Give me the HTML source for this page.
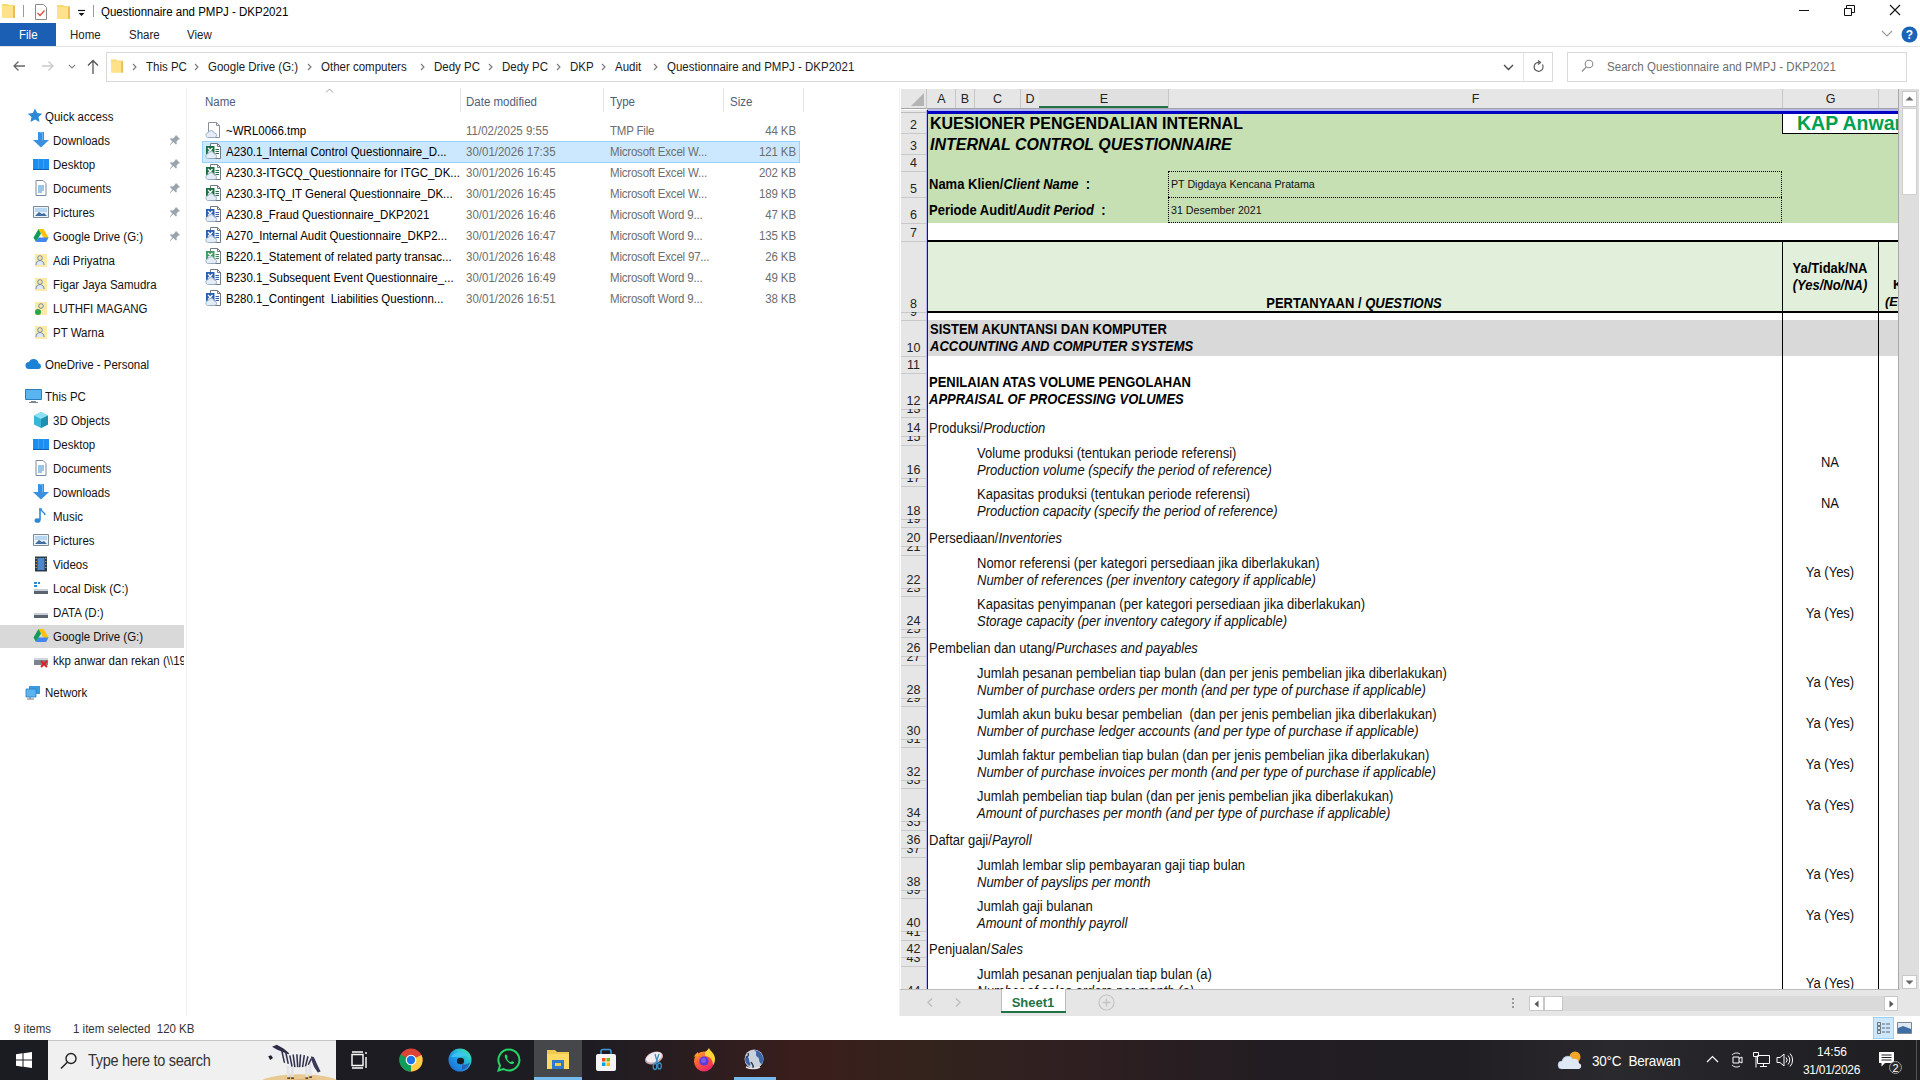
<!DOCTYPE html><html><head><meta charset="utf-8"><style>
*{margin:0;padding:0;box-sizing:border-box}
html,body{width:1920px;height:1080px;overflow:hidden;background:#fff;font-family:"Liberation Sans",sans-serif;color:#000}
.ab{position:absolute}
.t{position:absolute;white-space:nowrap;line-height:1}
.ui{font-size:11.5px;color:#000}
svg{position:absolute;overflow:visible}
</style></head><body>
<svg style="left:2px;top:3px" width="14" height="16" viewBox="0 0 14 16"><path d="M0 1h6l1 1h6v13H0z" fill="#f8d775"/><path d="M0 3h13v12H0z" fill="#ffe28a"/><path d="M11 3h2v12h-2z" fill="#e8bf52"/></svg>
<div class="ab" style="left:23px;top:5px;width:1px;height:12px;background:#9a9a9a"></div>
<svg style="left:35px;top:4px" width="12" height="16" viewBox="0 0 12 16"><path d="M0.5 0.5h8l3 3v12h-11z" fill="#fff" stroke="#8a8a8a"/><path d="M2.5 9l2.5 2.5 4.5-5" fill="none" stroke="#e04b3c" stroke-width="1.3"/></svg>
<svg style="left:57px;top:4px" width="14" height="16" viewBox="0 0 14 16"><path d="M0 1h6l1 1h6v13H0z" fill="#f8d775"/><path d="M0 3h13v12H0z" fill="#ffe28a"/><path d="M11 3h2v12h-2z" fill="#e8bf52"/></svg>
<svg style="left:77px;top:8px" width="10" height="9" viewBox="0 0 10 9"><path d="M1 2.5h7" stroke="#111" stroke-width="1.2"/><path d="M1.5 5h6l-3 3z" fill="#111"/></svg>
<div class="ab" style="left:93px;top:5px;width:1px;height:12px;background:#9a9a9a"></div>
<div class="t" style="left:101px;top:6.78px;font-size:11.5px;color:#000;transform:scaleY(1.12);transform-origin:0 9.73px;">Questionnaire and PMPJ - DKP2021</div>
<div class="ab" style="left:1799px;top:10px;width:10px;height:1px;background:#111"></div>
<svg style="left:1844px;top:5px" width="11" height="11" viewBox="0 0 11 11"><path d="M0.5 3.5h7v7h-7z M2.5 3.5v-3h8v7h-3" fill="none" stroke="#111"/></svg>
<svg style="left:1889px;top:4px" width="12" height="12" viewBox="0 0 12 12"><path d="M1 1l10 10M11 1L1 11" stroke="#111" stroke-width="1.1"/></svg>
<div class="ab" style="left:0px;top:23px;width:56px;height:23px;background:#1a5fb4"></div>
<div class="t" style="left:19px;top:29.78px;font-size:11.5px;color:#fff;transform:scaleY(1.12);transform-origin:0 9.73px;">File</div>
<div class="t" style="left:70px;top:29.78px;font-size:11.5px;color:#222;transform:scaleY(1.12);transform-origin:0 9.73px;">Home</div>
<div class="t" style="left:129px;top:29.78px;font-size:11.5px;color:#222;transform:scaleY(1.12);transform-origin:0 9.73px;">Share</div>
<div class="t" style="left:187px;top:29.78px;font-size:11.5px;color:#222;transform:scaleY(1.12);transform-origin:0 9.73px;">View</div>
<div class="ab" style="left:0px;top:46px;width:1920px;height:1px;background:#e3e3e3"></div>
<svg style="left:1881px;top:30px" width="12" height="8" viewBox="0 0 12 8"><path d="M1 1l5 5 5-5" fill="none" stroke="#9a9a9a" stroke-width="1.2"/></svg>
<svg style="left:1901px;top:26px" width="17" height="17" viewBox="0 0 17 17"><circle cx="8.5" cy="8.5" r="8" fill="#1a64b8"/><text x="8.5" y="13" font-size="12" font-weight="bold" text-anchor="middle" fill="#fff" font-family="Liberation Sans">?</text></svg>
<svg style="left:12px;top:60px" width="14" height="12" viewBox="0 0 14 12"><path d="M13 6H2M6.5 1.5L2 6l4.5 4.5" fill="none" stroke="#666" stroke-width="1.3"/></svg>
<svg style="left:41px;top:60px" width="14" height="12" viewBox="0 0 14 12"><path d="M1 6h11M7.5 1.5L12 6l-4.5 4.5" fill="none" stroke="#c9c9c9" stroke-width="1.3"/></svg>
<svg style="left:68px;top:64px" width="8" height="5" viewBox="0 0 8 5"><path d="M1 1l3 3 3-3" fill="none" stroke="#888" stroke-width="1.1"/></svg>
<svg style="left:87px;top:59px" width="12" height="15" viewBox="0 0 12 15"><path d="M6 15V2M1 6.5L6 1.5l5 5" fill="none" stroke="#555" stroke-width="1.3"/></svg>
<div class="ab" style="left:106px;top:52px;width:1447px;height:30px;border:1px solid #d9d9d9;background:#fff"></div>
<div class="ab" style="left:1523px;top:53px;width:1px;height:28px;background:#e5e5e5"></div>
<svg style="left:111px;top:58px" width="13" height="16" viewBox="0 0 14 16"><path d="M0 1h6l1 1h6v13H0z" fill="#f8d775"/><path d="M0 3h13v12H0z" fill="#ffe28a"/><path d="M11 3h2v12h-2z" fill="#e8bf52"/></svg>
<svg style="left:132px;top:63px" width="5" height="8" viewBox="0 0 5 8"><path d="M1 1l3 3-3 3" fill="none" stroke="#777" stroke-width="1.1"/></svg>
<svg style="left:194px;top:63px" width="5" height="8" viewBox="0 0 5 8"><path d="M1 1l3 3-3 3" fill="none" stroke="#777" stroke-width="1.1"/></svg>
<svg style="left:307px;top:63px" width="5" height="8" viewBox="0 0 5 8"><path d="M1 1l3 3-3 3" fill="none" stroke="#777" stroke-width="1.1"/></svg>
<svg style="left:420px;top:63px" width="5" height="8" viewBox="0 0 5 8"><path d="M1 1l3 3-3 3" fill="none" stroke="#777" stroke-width="1.1"/></svg>
<svg style="left:488px;top:63px" width="5" height="8" viewBox="0 0 5 8"><path d="M1 1l3 3-3 3" fill="none" stroke="#777" stroke-width="1.1"/></svg>
<svg style="left:556px;top:63px" width="5" height="8" viewBox="0 0 5 8"><path d="M1 1l3 3-3 3" fill="none" stroke="#777" stroke-width="1.1"/></svg>
<svg style="left:601px;top:63px" width="5" height="8" viewBox="0 0 5 8"><path d="M1 1l3 3-3 3" fill="none" stroke="#777" stroke-width="1.1"/></svg>
<svg style="left:653px;top:63px" width="5" height="8" viewBox="0 0 5 8"><path d="M1 1l3 3-3 3" fill="none" stroke="#777" stroke-width="1.1"/></svg>
<div class="t" style="left:146px;top:61.77px;font-size:11.5px;color:#1a1a1a;transform:scaleY(1.12);transform-origin:0 9.73px;">This PC</div>
<div class="t" style="left:208px;top:61.77px;font-size:11.5px;color:#1a1a1a;transform:scaleY(1.12);transform-origin:0 9.73px;">Google Drive (G:)</div>
<div class="t" style="left:321px;top:61.77px;font-size:11.5px;color:#1a1a1a;transform:scaleY(1.12);transform-origin:0 9.73px;">Other computers</div>
<div class="t" style="left:434px;top:61.77px;font-size:11.5px;color:#1a1a1a;transform:scaleY(1.12);transform-origin:0 9.73px;">Dedy PC</div>
<div class="t" style="left:502px;top:61.77px;font-size:11.5px;color:#1a1a1a;transform:scaleY(1.12);transform-origin:0 9.73px;">Dedy PC</div>
<div class="t" style="left:570px;top:61.77px;font-size:11.5px;color:#1a1a1a;transform:scaleY(1.12);transform-origin:0 9.73px;">DKP</div>
<div class="t" style="left:615px;top:61.77px;font-size:11.5px;color:#1a1a1a;transform:scaleY(1.12);transform-origin:0 9.73px;">Audit</div>
<div class="t" style="left:667px;top:61.77px;font-size:11.5px;color:#1a1a1a;transform:scaleY(1.12);transform-origin:0 9.73px;">Questionnaire and PMPJ - DKP2021</div>
<svg style="left:1503px;top:64px" width="11" height="7" viewBox="0 0 11 7"><path d="M1 1l4.5 4.5L10 1" fill="none" stroke="#444" stroke-width="1.3"/></svg>
<svg style="left:1533px;top:60px" width="12" height="13" viewBox="0 0 12 13"><path d="M9.5 4.5A4.5 4.5 0 1 1 6 2.3" fill="none" stroke="#555" stroke-width="1.2"/><path d="M5 0.5l2.5 2-2.5 2" fill="none" stroke="#555" stroke-width="1.2"/></svg>
<div class="ab" style="left:1567px;top:52px;width:340px;height:30px;border:1px solid #d9d9d9;background:#fff"></div>
<svg style="left:1581px;top:59px" width="13" height="14" viewBox="0 0 13 14"><circle cx="8" cy="5" r="3.8" fill="none" stroke="#8a8a8a" stroke-width="1.1"/><path d="M5.3 7.8L1 12.5" stroke="#8a8a8a" stroke-width="1.2"/></svg>
<div class="t" style="left:1607px;top:61.77px;font-size:11.5px;color:#6d6d6d;transform:scaleY(1.12);transform-origin:0 9.73px;letter-spacing:0.05px">Search Questionnaire and PMPJ - DKP2021</div>
<div class="ab" style="left:0px;top:625px;width:184px;height:23px;background:#d9d9d9"></div>
<div class="ab" style="left:0;top:0;width:184px;height:1016px;overflow:hidden">
<svg style="left:27px;top:108px" width="16" height="16" viewBox="0 0 16 16"><path d="M8 0.5l2.2 4.6 5 .6-3.7 3.4 1 5-4.5-2.5-4.5 2.5 1-5L0.8 5.7l5-.6z" fill="#2a8ad8"/></svg>
<div class="t" style="left:45px;top:111.77px;font-size:11.5px;color:#111;transform:scaleY(1.12);transform-origin:0 9.73px;">Quick access</div>
<svg style="left:33px;top:132px" width="16" height="16" viewBox="0 0 16 16"><path d="M5 0h6v8h5l-8 7.5L0 8h5z" fill="#3a8fe0"/><path d="M6.5 0.5h3v8" fill="none" stroke="#6ab2f0" stroke-width="1"/></svg>
<div class="t" style="left:53px;top:135.78px;font-size:11.5px;color:#111;transform:scaleY(1.12);transform-origin:0 9.73px;">Downloads</div>
<svg style="left:169px;top:134px" width="12" height="12" viewBox="0 0 12 12"><path d="M7 1l4 4-1.5.5-2 2 .3 2.5-1 .5-2.5-2.5L1.5 11 1 10.5 3.3 7.5 1 5.2l.5-1 2.5.3 2-2z" fill="#9aa4ad"/></svg>
<svg style="left:33px;top:156px" width="16" height="16" viewBox="0 0 16 16"><path d="M0 3h16v11H0z" fill="#1c8ef0"/><path d="M5 3h1v11H5zM10 3h1v11h-1z" fill="#3aa4f8"/><path d="M0 13h16v1H0z" fill="#0b5fb0"/></svg>
<div class="t" style="left:53px;top:159.78px;font-size:11.5px;color:#111;transform:scaleY(1.12);transform-origin:0 9.73px;">Desktop</div>
<svg style="left:169px;top:158px" width="12" height="12" viewBox="0 0 12 12"><path d="M7 1l4 4-1.5.5-2 2 .3 2.5-1 .5-2.5-2.5L1.5 11 1 10.5 3.3 7.5 1 5.2l.5-1 2.5.3 2-2z" fill="#9aa4ad"/></svg>
<svg style="left:33px;top:180px" width="16" height="16" viewBox="0 0 16 16"><path d="M3 0.5h7l3 3v12H3z" fill="#fff" stroke="#7a8ca0"/><path d="M5 6h6M5 8h6M5 10h6M5 12h4" stroke="#3a8ad0"/></svg>
<div class="t" style="left:53px;top:183.78px;font-size:11.5px;color:#111;transform:scaleY(1.12);transform-origin:0 9.73px;">Documents</div>
<svg style="left:169px;top:182px" width="12" height="12" viewBox="0 0 12 12"><path d="M7 1l4 4-1.5.5-2 2 .3 2.5-1 .5-2.5-2.5L1.5 11 1 10.5 3.3 7.5 1 5.2l.5-1 2.5.3 2-2z" fill="#9aa4ad"/></svg>
<svg style="left:33px;top:204px" width="16" height="16" viewBox="0 0 16 16"><path d="M0.5 2.5h15v11h-15z" fill="#eaf2fb" stroke="#7e8a96"/><path d="M2 12l4-4 3 2 2-1 3 3z" fill="#3f6ea0"/><path d="M2 4h12v4H2z" fill="#b9d6f0"/></svg>
<div class="t" style="left:53px;top:207.78px;font-size:11.5px;color:#111;transform:scaleY(1.12);transform-origin:0 9.73px;">Pictures</div>
<svg style="left:169px;top:206px" width="12" height="12" viewBox="0 0 12 12"><path d="M7 1l4 4-1.5.5-2 2 .3 2.5-1 .5-2.5-2.5L1.5 11 1 10.5 3.3 7.5 1 5.2l.5-1 2.5.3 2-2z" fill="#9aa4ad"/></svg>
<svg style="left:33px;top:228px" width="16" height="16" viewBox="0 0 16 16"><path d="M5.5 1h5l5 8.5-2.5 4.5z" fill="#ffc107"/><path d="M5.5 1L0.5 9.5 3 14l5-8.5z" fill="#0f9d58"/><path d="M3 14h10l2.5-4.5h-10z" fill="#4285f4"/></svg>
<div class="t" style="left:53px;top:231.78px;font-size:11.5px;color:#111;transform:scaleY(1.12);transform-origin:0 9.73px;">Google Drive (G:)</div>
<svg style="left:169px;top:230px" width="12" height="12" viewBox="0 0 12 12"><path d="M7 1l4 4-1.5.5-2 2 .3 2.5-1 .5-2.5-2.5L1.5 11 1 10.5 3.3 7.5 1 5.2l.5-1 2.5.3 2-2z" fill="#9aa4ad"/></svg>
<svg style="left:33px;top:252px" width="16" height="16" viewBox="0 0 16 16"><path d="M2 2h12v13H2z" fill="#ffe9a8"/><circle cx="7" cy="6" r="2.3" fill="none" stroke="#6b8cb0"/><path d="M3 13c0-3 2-4.5 4-4.5s4 1.5 4 4.5" fill="#dce8f5" stroke="#6b8cb0"/></svg>
<div class="t" style="left:53px;top:255.78px;font-size:11.5px;color:#111;transform:scaleY(1.12);transform-origin:0 9.73px;">Adi Priyatna</div>
<svg style="left:33px;top:276px" width="16" height="16" viewBox="0 0 16 16"><path d="M2 2h12v13H2z" fill="#ffe9a8"/><circle cx="7" cy="6" r="2.3" fill="none" stroke="#6b8cb0"/><path d="M3 13c0-3 2-4.5 4-4.5s4 1.5 4 4.5" fill="#dce8f5" stroke="#6b8cb0"/></svg>
<div class="t" style="left:53px;top:279.78px;font-size:11.5px;color:#111;transform:scaleY(1.12);transform-origin:0 9.73px;">Figar Jaya Samudra</div>
<svg style="left:33px;top:300px" width="16" height="16" viewBox="0 0 16 16"><path d="M2 2h12v13H2z" fill="#ffe9a8"/><circle cx="8" cy="6" r="2.3" fill="none" stroke="#6b8cb0"/><circle cx="5" cy="12" r="3" fill="#28a745"/></svg>
<div class="t" style="left:53px;top:303.78px;font-size:11.5px;color:#111;transform:scaleY(1.12);transform-origin:0 9.73px;">LUTHFI MAGANG</div>
<svg style="left:33px;top:324px" width="16" height="16" viewBox="0 0 16 16"><path d="M2 2h12v13H2z" fill="#ffe9a8"/><circle cx="7" cy="6" r="2.3" fill="none" stroke="#6b8cb0"/><path d="M3 13c0-3 2-4.5 4-4.5s4 1.5 4 4.5" fill="#dce8f5" stroke="#6b8cb0"/></svg>
<div class="t" style="left:53px;top:327.78px;font-size:11.5px;color:#111;transform:scaleY(1.12);transform-origin:0 9.73px;">PT Warna</div>
<svg style="left:25px;top:356px" width="16" height="16" viewBox="0 0 16 16"><path d="M4 13a3.5 3.5 0 0 1 0-7 5 5 0 0 1 9.5 1.2A3 3 0 0 1 14 13z" fill="#1d82d6"/></svg>
<div class="t" style="left:45px;top:359.78px;font-size:11.5px;color:#111;transform:scaleY(1.12);transform-origin:0 9.73px;">OneDrive - Personal</div>
<svg style="left:25px;top:388px" width="16" height="16" viewBox="0 0 16 16"><path d="M0.5 1.5h16v10h-16z" fill="#5ab4f0" stroke="#2c7cc0"/><path d="M6 13h5v1H6z M4 14h9v1H4z" fill="#7b8a99"/></svg>
<div class="t" style="left:45px;top:391.78px;font-size:11.5px;color:#111;transform:scaleY(1.12);transform-origin:0 9.73px;">This PC</div>
<svg style="left:33px;top:412px" width="16" height="16" viewBox="0 0 16 16"><path d="M8 0l7 3.5v9L8 16l-7-3.5v-9z" fill="#37b6d6"/><path d="M8 7L1 3.5 8 0l7 3.5z" fill="#8fe0f0"/><path d="M8 7v9l7-3.5v-9z" fill="#1f8fb0"/></svg>
<div class="t" style="left:53px;top:415.78px;font-size:11.5px;color:#111;transform:scaleY(1.12);transform-origin:0 9.73px;">3D Objects</div>
<svg style="left:33px;top:436px" width="16" height="16" viewBox="0 0 16 16"><path d="M0 3h16v11H0z" fill="#1c8ef0"/><path d="M5 3h1v11H5zM10 3h1v11h-1z" fill="#3aa4f8"/><path d="M0 13h16v1H0z" fill="#0b5fb0"/></svg>
<div class="t" style="left:53px;top:439.78px;font-size:11.5px;color:#111;transform:scaleY(1.12);transform-origin:0 9.73px;">Desktop</div>
<svg style="left:33px;top:460px" width="16" height="16" viewBox="0 0 16 16"><path d="M3 0.5h7l3 3v12H3z" fill="#fff" stroke="#7a8ca0"/><path d="M5 6h6M5 8h6M5 10h6M5 12h4" stroke="#3a8ad0"/></svg>
<div class="t" style="left:53px;top:463.78px;font-size:11.5px;color:#111;transform:scaleY(1.12);transform-origin:0 9.73px;">Documents</div>
<svg style="left:33px;top:484px" width="16" height="16" viewBox="0 0 16 16"><path d="M5 0h6v8h5l-8 7.5L0 8h5z" fill="#3a8fe0"/><path d="M6.5 0.5h3v8" fill="none" stroke="#6ab2f0" stroke-width="1"/></svg>
<div class="t" style="left:53px;top:487.78px;font-size:11.5px;color:#111;transform:scaleY(1.12);transform-origin:0 9.73px;">Downloads</div>
<svg style="left:33px;top:508px" width="16" height="16" viewBox="0 0 16 16"><path d="M6 1h2c0 3 4 3 4 6" fill="none" stroke="#2a8ad8" stroke-width="1.5"/><path d="M7 1v11" stroke="#2a8ad8" stroke-width="1.6"/><ellipse cx="4.5" cy="12.5" rx="3" ry="2.3" fill="#2a8ad8"/></svg>
<div class="t" style="left:53px;top:511.78px;font-size:11.5px;color:#111;transform:scaleY(1.12);transform-origin:0 9.73px;">Music</div>
<svg style="left:33px;top:532px" width="16" height="16" viewBox="0 0 16 16"><path d="M0.5 2.5h15v11h-15z" fill="#eaf2fb" stroke="#7e8a96"/><path d="M2 12l4-4 3 2 2-1 3 3z" fill="#3f6ea0"/><path d="M2 4h12v4H2z" fill="#b9d6f0"/></svg>
<div class="t" style="left:53px;top:535.77px;font-size:11.5px;color:#111;transform:scaleY(1.12);transform-origin:0 9.73px;">Pictures</div>
<svg style="left:33px;top:556px" width="16" height="16" viewBox="0 0 16 16"><path d="M2 0.5h12v15H2z" fill="#2a3a4a"/><path d="M4.5 2h7v12h-7z" fill="#4d88c8"/><path d="M2.7 2h1v1h-1zM2.7 5h1v1h-1zM2.7 8h1v1h-1zM2.7 11h1v1h-1zM12.3 2h1v1h-1zM12.3 5h1v1h-1zM12.3 8h1v1h-1zM12.3 11h1v1h-1z" fill="#e8c24a"/></svg>
<div class="t" style="left:53px;top:559.77px;font-size:11.5px;color:#111;transform:scaleY(1.12);transform-origin:0 9.73px;">Videos</div>
<svg style="left:33px;top:580px" width="16" height="16" viewBox="0 0 16 16"><path d="M1 9h14v5H1z" fill="#5a6470"/><path d="M1 9h14v2H1z" fill="#c8ced6"/><path d="M1 2h3v2H1zM5 2h2v2H5zM1 5h3v2H1z" fill="#2a8ad8"/></svg>
<div class="t" style="left:53px;top:583.77px;font-size:11.5px;color:#111;transform:scaleY(1.12);transform-origin:0 9.73px;">Local Disk (C:)</div>
<svg style="left:33px;top:604px" width="16" height="16" viewBox="0 0 16 16"><path d="M1 9h14v5H1z" fill="#5a6470"/><path d="M1 9h14v2H1z" fill="#c8ced6"/></svg>
<div class="t" style="left:53px;top:607.77px;font-size:11.5px;color:#111;transform:scaleY(1.12);transform-origin:0 9.73px;">DATA (D:)</div>
<svg style="left:33px;top:628px" width="16" height="16" viewBox="0 0 16 16"><path d="M5.5 1h5l5 8.5-2.5 4.5z" fill="#ffc107"/><path d="M5.5 1L0.5 9.5 3 14l5-8.5z" fill="#0f9d58"/><path d="M3 14h10l2.5-4.5h-10z" fill="#4285f4"/></svg>
<div class="t" style="left:53px;top:631.77px;font-size:11.5px;color:#111;transform:scaleY(1.12);transform-origin:0 9.73px;">Google Drive (G:)</div>
<svg style="left:33px;top:652px" width="16" height="16" viewBox="0 0 16 16"><path d="M1 6h14v7H1z" fill="#7b8490"/><path d="M1 6h14v2H1z" fill="#d0d6dc"/><path d="M8 9l6 6M14 9l-6 6" stroke="#e02020" stroke-width="2"/></svg>
<div class="t" style="left:53px;top:655.77px;font-size:11.5px;color:#111;transform:scaleY(1.12);transform-origin:0 9.73px;">kkp anwar dan rekan (\\192.168.1.2)</div>
<svg style="left:25px;top:684px" width="16" height="16" viewBox="0 0 16 16"><path d="M4 2h11v8H4z" fill="#3a9ae0"/><path d="M1 5h10v8H1z" fill="#5ab4f0" stroke="#2c7cc0" stroke-width=".8"/><path d="M5 13v2M2 15h7" stroke="#6a7a8a"/></svg>
<div class="t" style="left:45px;top:687.77px;font-size:11.5px;color:#111;transform:scaleY(1.12);transform-origin:0 9.73px;">Network</div>
</div>
<div class="ab" style="left:186px;top:88px;width:1px;height:928px;background:#f0f0f0"></div>
<div class="t" style="left:205px;top:96.77px;font-size:11.5px;color:#4c607a;transform:scaleY(1.12);transform-origin:0 9.73px;">Name</div>
<svg style="left:325px;top:88px" width="9" height="5" viewBox="0 0 9 5"><path d="M1 4.5l3.5-3.5 3.5 3.5" fill="none" stroke="#9aa0a6" stroke-width="1"/></svg>
<div class="t" style="left:466px;top:96.77px;font-size:11.5px;color:#4c607a;transform:scaleY(1.12);transform-origin:0 9.73px;">Date modified</div>
<div class="t" style="left:610px;top:96.77px;font-size:11.5px;color:#4c607a;transform:scaleY(1.12);transform-origin:0 9.73px;">Type</div>
<div class="t" style="left:730px;top:96.77px;font-size:11.5px;color:#4c607a;transform:scaleY(1.12);transform-origin:0 9.73px;">Size</div>
<div class="ab" style="left:460px;top:88px;width:1px;height:24px;background:#e5e5e5"></div>
<div class="ab" style="left:603px;top:88px;width:1px;height:24px;background:#e5e5e5"></div>
<div class="ab" style="left:723px;top:88px;width:1px;height:24px;background:#e5e5e5"></div>
<div class="ab" style="left:803px;top:88px;width:1px;height:24px;background:#e5e5e5"></div>
<div class="ab" style="left:202px;top:141px;width:598px;height:22px;background:#cce8ff;border:1px solid #99d1ff"></div>
<svg style="left:206px;top:122px" width="16" height="16" viewBox="0 0 16 16"><path d="M2.5 0.5h8l3 3v12h-11z" fill="#fff" stroke="#8a9096"/><path d="M10.5 0.5v3h3" fill="none" stroke="#8a9096"/><path d="M1.5 15.5a2.6 2.6 0 0 1 .6-5 3.3 3.3 0 0 1 6.2.6 2.2 2.2 0 0 1 .2 4.4z" fill="#e4ecf6" stroke="#8ea4bc" stroke-width=".8"/></svg>
<div class="t" style="left:226px;top:125.77px;font-size:11.5px;color:#000;transform:scaleY(1.12);transform-origin:0 9.73px;letter-spacing:0px">~WRL0066.tmp</div>
<div class="t" style="left:466px;top:125.77px;font-size:11.5px;color:#6d6d6d;transform:scaleY(1.12);transform-origin:0 9.73px;letter-spacing:0px">11/02/2025 9:55</div>
<div class="t" style="left:610px;top:125.77px;font-size:11.5px;color:#6d6d6d;transform:scaleY(1.12);transform-origin:0 9.73px;letter-spacing:-0.2px">TMP File</div>
<div class="t" style="right:1124px;top:125.80px;font-size:11.5px;color:#6d6d6d;letter-spacing:-0.1px;transform:scaleY(1.12);transform-origin:0 9.73px">44 KB</div>
<svg style="left:206px;top:143px" width="16" height="16" viewBox="0 0 16 16"><path d="M4.5 0.5h7l3 3v12h-10z" fill="#fff" stroke="#707a84"/><path d="M11.5 0.5v3h3" fill="none" stroke="#707a84"/><path d="M0 3h8.5v8.5H0z" fill="#1d6f42"/><path d="M2 5l4.5 4.5M6.5 5L2 9.5" stroke="#fff" stroke-width="1.2"/><path d="M9.5 6.5h3.5M9.5 8.5h3.5M9.5 10.5h3.5" stroke="#2a6a44" stroke-width="1"/><path d="M1.5 15.5a2.6 2.6 0 0 1 .6-5 3.3 3.3 0 0 1 6.2.6 2.2 2.2 0 0 1 .2 4.4z" fill="#e4ecf6" stroke="#8ea4bc" stroke-width=".8"/></svg>
<div class="t" style="left:226px;top:146.78px;font-size:11.5px;color:#000;transform:scaleY(1.12);transform-origin:0 9.73px;letter-spacing:0px">A230.1_Internal Control Questionnaire_D...</div>
<div class="t" style="left:466px;top:146.78px;font-size:11.5px;color:#6d6d6d;transform:scaleY(1.12);transform-origin:0 9.73px;letter-spacing:0px">30/01/2026 17:35</div>
<div class="t" style="left:610px;top:146.78px;font-size:11.5px;color:#6d6d6d;transform:scaleY(1.12);transform-origin:0 9.73px;letter-spacing:-0.2px">Microsoft Excel W...</div>
<div class="t" style="right:1124px;top:146.80px;font-size:11.5px;color:#6d6d6d;letter-spacing:-0.1px;transform:scaleY(1.12);transform-origin:0 9.73px">121 KB</div>
<svg style="left:206px;top:164px" width="16" height="16" viewBox="0 0 16 16"><path d="M4.5 0.5h7l3 3v12h-10z" fill="#fff" stroke="#707a84"/><path d="M11.5 0.5v3h3" fill="none" stroke="#707a84"/><path d="M0 3h8.5v8.5H0z" fill="#1d6f42"/><path d="M2 5l4.5 4.5M6.5 5L2 9.5" stroke="#fff" stroke-width="1.2"/><path d="M9.5 6.5h3.5M9.5 8.5h3.5M9.5 10.5h3.5" stroke="#2a6a44" stroke-width="1"/><path d="M1.5 15.5a2.6 2.6 0 0 1 .6-5 3.3 3.3 0 0 1 6.2.6 2.2 2.2 0 0 1 .2 4.4z" fill="#e4ecf6" stroke="#8ea4bc" stroke-width=".8"/></svg>
<div class="t" style="left:226px;top:167.78px;font-size:11.5px;color:#000;transform:scaleY(1.12);transform-origin:0 9.73px;letter-spacing:0px">A230.3-ITGCQ_Questionnaire for ITGC_DK...</div>
<div class="t" style="left:466px;top:167.78px;font-size:11.5px;color:#6d6d6d;transform:scaleY(1.12);transform-origin:0 9.73px;letter-spacing:0px">30/01/2026 16:45</div>
<div class="t" style="left:610px;top:167.78px;font-size:11.5px;color:#6d6d6d;transform:scaleY(1.12);transform-origin:0 9.73px;letter-spacing:-0.2px">Microsoft Excel W...</div>
<div class="t" style="right:1124px;top:167.80px;font-size:11.5px;color:#6d6d6d;letter-spacing:-0.1px;transform:scaleY(1.12);transform-origin:0 9.73px">202 KB</div>
<svg style="left:206px;top:185px" width="16" height="16" viewBox="0 0 16 16"><path d="M4.5 0.5h7l3 3v12h-10z" fill="#fff" stroke="#707a84"/><path d="M11.5 0.5v3h3" fill="none" stroke="#707a84"/><path d="M0 3h8.5v8.5H0z" fill="#1d6f42"/><path d="M2 5l4.5 4.5M6.5 5L2 9.5" stroke="#fff" stroke-width="1.2"/><path d="M9.5 6.5h3.5M9.5 8.5h3.5M9.5 10.5h3.5" stroke="#2a6a44" stroke-width="1"/><path d="M1.5 15.5a2.6 2.6 0 0 1 .6-5 3.3 3.3 0 0 1 6.2.6 2.2 2.2 0 0 1 .2 4.4z" fill="#e4ecf6" stroke="#8ea4bc" stroke-width=".8"/></svg>
<div class="t" style="left:226px;top:188.78px;font-size:11.5px;color:#000;transform:scaleY(1.12);transform-origin:0 9.73px;letter-spacing:0px">A230.3-ITQ_IT General Questionnaire_DK...</div>
<div class="t" style="left:466px;top:188.78px;font-size:11.5px;color:#6d6d6d;transform:scaleY(1.12);transform-origin:0 9.73px;letter-spacing:0px">30/01/2026 16:45</div>
<div class="t" style="left:610px;top:188.78px;font-size:11.5px;color:#6d6d6d;transform:scaleY(1.12);transform-origin:0 9.73px;letter-spacing:-0.2px">Microsoft Excel W...</div>
<div class="t" style="right:1124px;top:188.80px;font-size:11.5px;color:#6d6d6d;letter-spacing:-0.1px;transform:scaleY(1.12);transform-origin:0 9.73px">189 KB</div>
<svg style="left:206px;top:206px" width="16" height="16" viewBox="0 0 16 16"><path d="M4.5 0.5h7l3 3v12h-10z" fill="#fff" stroke="#707a84"/><path d="M11.5 0.5v3h3" fill="none" stroke="#707a84"/><path d="M0 3h8.5v8.5H0z" fill="#2b5fb4"/><path d="M2 5l4.5 4.5M6.5 5L2 9.5" stroke="#fff" stroke-width="1.2"/><path d="M9.5 6.5h3.5M9.5 8.5h3.5M9.5 10.5h3.5" stroke="#3a5fa8" stroke-width="1"/><path d="M1.5 15.5a2.6 2.6 0 0 1 .6-5 3.3 3.3 0 0 1 6.2.6 2.2 2.2 0 0 1 .2 4.4z" fill="#e4ecf6" stroke="#8ea4bc" stroke-width=".8"/></svg>
<div class="t" style="left:226px;top:209.78px;font-size:11.5px;color:#000;transform:scaleY(1.12);transform-origin:0 9.73px;letter-spacing:0px">A230.8_Fraud Questionnaire_DKP2021</div>
<div class="t" style="left:466px;top:209.78px;font-size:11.5px;color:#6d6d6d;transform:scaleY(1.12);transform-origin:0 9.73px;letter-spacing:0px">30/01/2026 16:46</div>
<div class="t" style="left:610px;top:209.78px;font-size:11.5px;color:#6d6d6d;transform:scaleY(1.12);transform-origin:0 9.73px;letter-spacing:-0.2px">Microsoft Word 9...</div>
<div class="t" style="right:1124px;top:209.80px;font-size:11.5px;color:#6d6d6d;letter-spacing:-0.1px;transform:scaleY(1.12);transform-origin:0 9.73px">47 KB</div>
<svg style="left:206px;top:227px" width="16" height="16" viewBox="0 0 16 16"><path d="M4.5 0.5h7l3 3v12h-10z" fill="#fff" stroke="#707a84"/><path d="M11.5 0.5v3h3" fill="none" stroke="#707a84"/><path d="M0 3h8.5v8.5H0z" fill="#2b5fb4"/><path d="M2 5l4.5 4.5M6.5 5L2 9.5" stroke="#fff" stroke-width="1.2"/><path d="M9.5 6.5h3.5M9.5 8.5h3.5M9.5 10.5h3.5" stroke="#3a5fa8" stroke-width="1"/><path d="M1.5 15.5a2.6 2.6 0 0 1 .6-5 3.3 3.3 0 0 1 6.2.6 2.2 2.2 0 0 1 .2 4.4z" fill="#e4ecf6" stroke="#8ea4bc" stroke-width=".8"/></svg>
<div class="t" style="left:226px;top:230.78px;font-size:11.5px;color:#000;transform:scaleY(1.12);transform-origin:0 9.73px;letter-spacing:0px">A270_Internal Audit Questionnaire_DKP2...</div>
<div class="t" style="left:466px;top:230.78px;font-size:11.5px;color:#6d6d6d;transform:scaleY(1.12);transform-origin:0 9.73px;letter-spacing:0px">30/01/2026 16:47</div>
<div class="t" style="left:610px;top:230.78px;font-size:11.5px;color:#6d6d6d;transform:scaleY(1.12);transform-origin:0 9.73px;letter-spacing:-0.2px">Microsoft Word 9...</div>
<div class="t" style="right:1124px;top:230.80px;font-size:11.5px;color:#6d6d6d;letter-spacing:-0.1px;transform:scaleY(1.12);transform-origin:0 9.73px">135 KB</div>
<svg style="left:206px;top:248px" width="16" height="16" viewBox="0 0 16 16"><path d="M4.5 0.5h7l3 3v12h-10z" fill="#fff" stroke="#707a84"/><path d="M11.5 0.5v3h3" fill="none" stroke="#707a84"/><path d="M0 3h8.5v8.5H0z" fill="#3f9a62"/><path d="M2 5l4.5 4.5M6.5 5L2 9.5" stroke="#fff" stroke-width="1.2"/><path d="M9.5 6.5h3.5M9.5 8.5h3.5M9.5 10.5h3.5" stroke="#4a8a5a" stroke-width="1"/><path d="M1.5 15.5a2.6 2.6 0 0 1 .6-5 3.3 3.3 0 0 1 6.2.6 2.2 2.2 0 0 1 .2 4.4z" fill="#e4ecf6" stroke="#8ea4bc" stroke-width=".8"/></svg>
<div class="t" style="left:226px;top:251.78px;font-size:11.5px;color:#000;transform:scaleY(1.12);transform-origin:0 9.73px;letter-spacing:0px">B220.1_Statement of related party transac...</div>
<div class="t" style="left:466px;top:251.78px;font-size:11.5px;color:#6d6d6d;transform:scaleY(1.12);transform-origin:0 9.73px;letter-spacing:0px">30/01/2026 16:48</div>
<div class="t" style="left:610px;top:251.78px;font-size:11.5px;color:#6d6d6d;transform:scaleY(1.12);transform-origin:0 9.73px;letter-spacing:-0.2px">Microsoft Excel 97...</div>
<div class="t" style="right:1124px;top:251.80px;font-size:11.5px;color:#6d6d6d;letter-spacing:-0.1px;transform:scaleY(1.12);transform-origin:0 9.73px">26 KB</div>
<svg style="left:206px;top:269px" width="16" height="16" viewBox="0 0 16 16"><path d="M4.5 0.5h7l3 3v12h-10z" fill="#fff" stroke="#707a84"/><path d="M11.5 0.5v3h3" fill="none" stroke="#707a84"/><path d="M0 3h8.5v8.5H0z" fill="#2b5fb4"/><path d="M2 5l4.5 4.5M6.5 5L2 9.5" stroke="#fff" stroke-width="1.2"/><path d="M9.5 6.5h3.5M9.5 8.5h3.5M9.5 10.5h3.5" stroke="#3a5fa8" stroke-width="1"/><path d="M1.5 15.5a2.6 2.6 0 0 1 .6-5 3.3 3.3 0 0 1 6.2.6 2.2 2.2 0 0 1 .2 4.4z" fill="#e4ecf6" stroke="#8ea4bc" stroke-width=".8"/></svg>
<div class="t" style="left:226px;top:272.78px;font-size:11.5px;color:#000;transform:scaleY(1.12);transform-origin:0 9.73px;letter-spacing:0px">B230.1_Subsequent Event Questionnaire_...</div>
<div class="t" style="left:466px;top:272.78px;font-size:11.5px;color:#6d6d6d;transform:scaleY(1.12);transform-origin:0 9.73px;letter-spacing:0px">30/01/2026 16:49</div>
<div class="t" style="left:610px;top:272.78px;font-size:11.5px;color:#6d6d6d;transform:scaleY(1.12);transform-origin:0 9.73px;letter-spacing:-0.2px">Microsoft Word 9...</div>
<div class="t" style="right:1124px;top:272.80px;font-size:11.5px;color:#6d6d6d;letter-spacing:-0.1px;transform:scaleY(1.12);transform-origin:0 9.73px">49 KB</div>
<svg style="left:206px;top:290px" width="16" height="16" viewBox="0 0 16 16"><path d="M4.5 0.5h7l3 3v12h-10z" fill="#fff" stroke="#707a84"/><path d="M11.5 0.5v3h3" fill="none" stroke="#707a84"/><path d="M0 3h8.5v8.5H0z" fill="#2b5fb4"/><path d="M2 5l4.5 4.5M6.5 5L2 9.5" stroke="#fff" stroke-width="1.2"/><path d="M9.5 6.5h3.5M9.5 8.5h3.5M9.5 10.5h3.5" stroke="#3a5fa8" stroke-width="1"/><path d="M1.5 15.5a2.6 2.6 0 0 1 .6-5 3.3 3.3 0 0 1 6.2.6 2.2 2.2 0 0 1 .2 4.4z" fill="#e4ecf6" stroke="#8ea4bc" stroke-width=".8"/></svg>
<div class="t" style="left:226px;top:293.78px;font-size:11.5px;color:#000;transform:scaleY(1.12);transform-origin:0 9.73px;letter-spacing:0px">B280.1_Contingent&nbsp; Liabilities Questionn...</div>
<div class="t" style="left:466px;top:293.78px;font-size:11.5px;color:#6d6d6d;transform:scaleY(1.12);transform-origin:0 9.73px;letter-spacing:0px">30/01/2026 16:51</div>
<div class="t" style="left:610px;top:293.78px;font-size:11.5px;color:#6d6d6d;transform:scaleY(1.12);transform-origin:0 9.73px;letter-spacing:-0.2px">Microsoft Word 9...</div>
<div class="t" style="right:1124px;top:293.80px;font-size:11.5px;color:#6d6d6d;letter-spacing:-0.1px;transform:scaleY(1.12);transform-origin:0 9.73px">38 KB</div>
<div class="t" style="left:14px;top:1023.77px;font-size:11.5px;color:#333;transform:scaleY(1.12);transform-origin:0 9.73px;">9 items</div>
<div class="t" style="left:73px;top:1023.77px;font-size:11.5px;color:#333;transform:scaleY(1.12);transform-origin:0 9.73px;">1 item selected&nbsp;&nbsp;120 KB</div>
<div class="ab" style="left:1873px;top:1017px;width:21px;height:22px;background:#cce8ff;border:1px solid #99d1ff"></div>
<svg style="left:1877px;top:1022px" width="14" height="13" viewBox="0 0 14 13"><path d="M0.5 0.5h3v3h-3zM0.5 4.5h3v3h-3zM0.5 8.5h3v3h-3z" fill="none" stroke="#555" stroke-width=".8"/><path d="M5 2h3M9 2h4M5 6h3M9 6h4M5 10h3M9 10h4" stroke="#555" stroke-width=".9"/></svg>
<svg style="left:1897px;top:1022px" width="15" height="12" viewBox="0 0 15 12"><path d="M0.5 0.5h14v11h-14z" fill="#dfe9f3" stroke="#7a8794"/><path d="M1 6l5-2 8 3v4H1z" fill="#3d6fa6"/></svg>
<div class="ab" style="left:0px;top:1040px;width:1920px;height:40px;background:linear-gradient(90deg,#1b1c22 0%,#1c1c22 30%,#2a1d20 36%,#3a1e1c 42%,#33231c 48%,#2f1f21 56%,#221d22 66%,#201e23 76%,#2a292e 84%,#222125 92%,#1f1f22 100%)"></div>
<svg style="left:16px;top:1052px" width="16" height="16" viewBox="0 0 16 16"><path d="M0 2.2l6.5-.9v6.2H0zM7.5 1.2L16 0v7.5H7.5zM0 8.5h6.5v6.2L0 13.8zM7.5 8.5H16V16l-8.5-1.2z" fill="#fff"/></svg>
<div class="ab" style="left:48px;top:1040px;width:288px;height:40px;background:#f0f0f0;border-top:1px solid #c4c4c4"></div>
<svg style="left:60px;top:1052px" width="18" height="18" viewBox="0 0 18 18"><circle cx="11" cy="6.5" r="5" fill="none" stroke="#222" stroke-width="1.4"/><path d="M7.3 10.2L1 16.5" stroke="#222" stroke-width="1.5"/></svg>
<div class="t" style="left:88px;top:1054.12px;font-size:14.5px;color:#333;transform:scaleY(1.12);transform-origin:0 12.27px;letter-spacing:-0.3px">Type here to search</div>
<svg style="left:250px;top:1040px" width="86" height="40" viewBox="0 -2 86 42"><defs><clipPath id="zb"><ellipse cx="48" cy="20" rx="15" ry="7"/><path d="M29 9l9 3 3 12-8-2z"/></clipPath></defs><ellipse cx="50" cy="45" rx="44" ry="11" fill="#e8c992"/><ellipse cx="52" cy="46" rx="30" ry="7" fill="#dcb277"/><path d="M36 24h3l0.5 14h-2.5zM41 24h3l-0.5 14h-2.5zM55 23h3l1 15h-2.5zM59 23h3l0.5 14h-2.5z" fill="#e2e2ea"/><path d="M37 37h3v2h-3zM41 37h3v2h-3zM56 37h3v2h-3zM60 36h3v2h-3z" fill="#6b4a2a"/><ellipse cx="48" cy="20" rx="15" ry="7" fill="#ececf3"/><path d="M29 9l9 3 3 12-8-2z" fill="#ececf3"/><path d="M21 5l9 2 3 6-8 5-6 1-2-4z" fill="#ececf3"/><path d="M17 15l3-1 2 3-3 2z" fill="#1e1e2a"/><g clip-path="url(#zb)" stroke="#30304a" stroke-width="1.6"><path d="M31 8l3 14M35 9l3 14M39 11l3 15M43 12l2 15M47 12l1 15M51 12l-1 15M55 13l-2 14M59 14l-3 12M63 16l-4 8"/></g><path d="M21 5l5-2 7 4 6 5-1 1-7-3-5-2z" fill="#2c2c44"/><path d="M62 15l3 1 4 9 3 6-3 1-4-6-3-8z" fill="#3a3a58"/></svg>
<svg style="left:351px;top:1051px" width="18" height="18" viewBox="0 0 18 18"><path d="M1 3.5h11v11H1z" fill="none" stroke="#fff" stroke-width="1.4"/><path d="M1 1h11M1 17h11M15 1v2M15 6v11" stroke="#fff" stroke-width="1.4"/></svg>
<svg style="left:399px;top:1048px" width="24" height="24" viewBox="0 0 24 24"><circle cx="12" cy="12" r="11.5" fill="#db4437"/><path d="M12 12L2 18A11.5 11.5 0 0 0 12 23.5z M12 12 L2 18 A11.5 11.5 0 0 1 1.5 6.5z" fill="#0f9d58"/><path d="M12 12L22.5 7A11.5 11.5 0 0 1 12 23.5z" fill="#ffcd40"/><circle cx="12" cy="12" r="5.3" fill="#fff"/><circle cx="12" cy="12" r="4.2" fill="#1a73e8"/></svg>
<svg style="left:448px;top:1048px" width="24" height="24" viewBox="0 0 24 24"><defs><linearGradient id="eg" x1="0" y1="1" x2="1" y2="0"><stop offset="0" stop-color="#1a5fc8"/><stop offset="0.45" stop-color="#1f9be8"/><stop offset="0.75" stop-color="#2fd0c8"/><stop offset="1" stop-color="#5ee07a"/></linearGradient></defs><circle cx="12" cy="12" r="11.5" fill="url(#eg)"/><path d="M3 9c3-6 15-7 19 1-2-2-6-3-9-1z" fill="#45c8f5" opacity=".8"/><ellipse cx="12.5" cy="13" rx="3.6" ry="3.2" fill="#1b1c22"/><path d="M14 16c2 1 5 1 8-2-1 4-4 7-8 8z" fill="#2a4aa0" opacity=".7"/></svg>
<svg style="left:497px;top:1048px" width="24" height="24" viewBox="0 0 24 24"><path d="M12 1.5A10.5 10.5 0 0 0 3 17.5L1.5 22.5 6.5 21A10.5 10.5 0 1 0 12 1.5z" fill="none" stroke="#25d366" stroke-width="2"/><path d="M8 7c1-1 2 0 2.5 1.5s-1 1.5 0 3 2 2.5 3 2.5 1.5-1 2.5-.5 1.5 1 .5 2-3 1-6-2-3-5.5-2.5-6.5z" fill="#25d366"/></svg>
<div class="ab" style="left:534px;top:1040px;width:48px;height:40px;background:#45474b"></div>
<div class="ab" style="left:534px;top:1077px;width:48px;height:3px;background:#76b9ed"></div>
<svg style="left:546px;top:1049px" width="24" height="22" viewBox="0 0 24 22"><path d="M1 1h8l2 2h12v17H1z" fill="#f2c94c"/><path d="M1 5h22v15H1z" fill="#ffd966"/><path d="M6 11h12v9H6z" fill="#2d7ad0"/><path d="M9 14h6v3H9z" fill="#f2c94c"/></svg>
<svg style="left:595px;top:1048px" width="22" height="24" viewBox="0 0 22 24"><path d="M6 6V3.5A2 2 0 0 1 8 1.5h6a2 2 0 0 1 2 2V6" fill="none" stroke="#3a9ad8" stroke-width="1.6"/><rect x="1" y="6" width="20" height="17" rx="2" fill="#f5f5f5"/><path d="M7 10h3.5v3.5H7z" fill="#f25022"/><path d="M11.5 10H15v3.5h-3.5z" fill="#7fba00"/><path d="M7 14.5h3.5V18H7z" fill="#00a4ef"/><path d="M11.5 14.5H15V18h-3.5z" fill="#ffb900"/></svg>
<svg style="left:643px;top:1049px" width="24" height="24" viewBox="0 0 24 24"><ellipse cx="11" cy="9" rx="9.5" ry="5.8" transform="rotate(-22 11 9)" fill="#c8a8b0"/><ellipse cx="11.3" cy="8.3" rx="8.3" ry="4.6" transform="rotate(-22 11 9)" fill="#f4eef0"/><path d="M12 5l2.5 9M16 5l-3 9" stroke="#3a90c8" stroke-width="1.3"/><ellipse cx="12" cy="17.5" rx="1.8" ry="3" fill="none" stroke="#3a90c8" stroke-width="1.3"/><ellipse cx="16.5" cy="17" rx="1.8" ry="3" fill="none" stroke="#3a90c8" stroke-width="1.3"/></svg>
<svg style="left:692px;top:1048px" width="24" height="24" viewBox="0 0 24 24"><defs><linearGradient id="ff" x1="0" y1="0" x2="0.6" y2="1"><stop offset="0" stop-color="#ffb02e"/><stop offset=".5" stop-color="#ff5a36"/><stop offset="1" stop-color="#e8286a"/></linearGradient></defs><circle cx="12" cy="13.5" r="10" fill="url(#ff)"/><path d="M13 4c3-2 4-4 4-4 1 3 6 5 6 11 0 3-1 5-2 6 0-5-3-9-8-9z" fill="#ffd43a"/><path d="M2 9c1-3 3-4 4-5 0 2 1 3 2 3z" fill="#ff9a2e"/><circle cx="12" cy="13" r="4.6" fill="#5b3ad6"/><circle cx="11.5" cy="12.5" r="2.5" fill="#7a5cf0"/></svg>
<svg style="left:742px;top:1048px" width="24" height="24" viewBox="0 0 24 24"><circle cx="12" cy="11" r="9.5" fill="#c9d2dc"/><path d="M12 2a9.5 9.5 0 0 1 8 14c-2 0-3-3-3-5s-3-2-3-4 1-3-2-5zM4 8c2 0 3 2 3 4s2 3 1 6c-3-1-5-4-5-7z" fill="#3d64a8"/><path d="M6 5c1 2 0 4-2 4M9 14c1 2 3 3 2 6" stroke="#2a3a50" stroke-width="1.4" fill="none"/><path d="M4 19c4 2 10 2 14 0" stroke="#e8e8e8" stroke-width="1.5" fill="none"/></svg>
<div class="ab" style="left:734px;top:1077px;width:42px;height:3px;background:#76b9ed"></div>
<svg style="left:1558px;top:1050px" width="26" height="20" viewBox="0 0 26 20"><circle cx="17" cy="7" r="5.5" fill="#f3a52a"/><path d="M4 19a4 4 0 0 1 0-8 6 6 0 0 1 11-2 4.5 4.5 0 0 1 6 4.2A3 3 0 0 1 21 19z" fill="#dfe8f5"/><path d="M4 19a4 4 0 0 1 0-8 6 6 0 0 1 11-2" fill="none" stroke="#a8c0dc" stroke-width=".6"/></svg>
<div class="t" style="left:1592px;top:1054.67px;font-size:13.5px;color:#fff;transform:scaleY(1.12);transform-origin:0 11.43px;letter-spacing:-0.2px">30°C&nbsp;&nbsp;Berawan</div>
<svg style="left:1706px;top:1055px" width="13" height="8" viewBox="0 0 13 8"><path d="M1 7l5.5-5.5L12 7" fill="none" stroke="#fff" stroke-width="1.2"/></svg>
<svg style="left:1731px;top:1052px" width="12" height="16" viewBox="0 0 12 16"><path d="M2 5h6v6H2zM8 6.5l3-1.5v6l-3-1.5" fill="none" stroke="#fff" stroke-width="1"/><path d="M1 3a6 6 0 0 1 8-1M1 13a6 6 0 0 0 8 1" fill="none" stroke="#fff" stroke-width=".9"/></svg>
<svg style="left:1753px;top:1052px" width="17" height="16" viewBox="0 0 17 16"><path d="M4.5 3.5h12v8h-12zM10.5 11.5v2.5M7 14.5h7" fill="none" stroke="#fff" stroke-width="1"/><path d="M0.5 0.5h5v4h-5zM3 4.5v11" fill="none" stroke="#fff" stroke-width="1"/></svg>
<svg style="left:1776px;top:1052px" width="16" height="16" viewBox="0 0 16 16"><path d="M1 5.5h3l4-3.5v12l-4-3.5H1z" fill="none" stroke="#fff" stroke-width="1"/><path d="M10 5.5a3.5 3.5 0 0 1 0 5M12 3.5a6.5 6.5 0 0 1 0 9M14 1.5a9.5 9.5 0 0 1 0 13" fill="none" stroke="#fff" stroke-width="1"/></svg>
<div class="t" style="left:1817px;top:1046.00px;font-size:12px;color:#fff;transform:scaleY(1.12);transform-origin:0 10.16px;">14:56</div>
<div class="t" style="left:1803px;top:1063.50px;font-size:12px;color:#fff;transform:scaleY(1.12);transform-origin:0 10.16px;letter-spacing:-0.3px">31/01/2026</div>
<svg style="left:1878px;top:1051px" width="26" height="24" viewBox="0 0 26 24"><path d="M1 1h15v11H7l-3.5 3.5V12H1z" fill="#fff"/><path d="M3.5 4h10M3.5 6.5h10M3.5 9h10" stroke="#222" stroke-width="1"/><circle cx="17.5" cy="16.5" r="6" fill="#2a2a2a" stroke="#999" stroke-width="1"/><text x="17.5" y="20.5" font-size="11" fill="#fff" text-anchor="middle" font-family="Liberation Sans">2</text></svg>
<div class="ab" style="left:1916px;top:1040px;width:1px;height:40px;background:#555"></div><div class="ab" style="left:900px;top:88px;width:1020px;height:928px;background:#fff"></div>
<div class="ab" style="left:899px;top:88px;width:1px;height:928px;background:#f2f2f2"></div>
<div class="ab" style="left:901px;top:89px;width:998px;height:20px;background:#e6e6e6"></div>
<div class="ab" style="left:901px;top:108px;width:998px;height:1px;background:#a4a6a4"></div>
<div class="ab" style="left:927px;top:109px;width:972px;height:2px;background:#b4b4ee"></div>
<svg style="left:901px;top:89px" width="26" height="20" viewBox="0 0 26 20"><path d="M23 4v13H10z" fill="#b4b4b4"/></svg>
<div class="ab" style="left:926px;top:89px;width:1px;height:20px;background:#c6c6c6"></div>
<div class="ab" style="left:955px;top:89px;width:1px;height:19px;background:#c6c6c6"></div>
<div class="t" style="left:641.5px;width:600px;text-align:center;top:93.00px;font-size:12.5px;color:#222;">A</div>
<div class="ab" style="left:974px;top:89px;width:1px;height:19px;background:#c6c6c6"></div>
<div class="t" style="left:665.0px;width:600px;text-align:center;top:93.00px;font-size:12.5px;color:#222;">B</div>
<div class="ab" style="left:1020px;top:89px;width:1px;height:19px;background:#c6c6c6"></div>
<div class="t" style="left:697.5px;width:600px;text-align:center;top:93.00px;font-size:12.5px;color:#222;">C</div>
<div class="ab" style="left:1039px;top:89px;width:1px;height:19px;background:#c6c6c6"></div>
<div class="t" style="left:730.0px;width:600px;text-align:center;top:93.00px;font-size:12.5px;color:#222;">D</div>
<div class="ab" style="left:1039px;top:89px;width:129px;height:19px;background:#e0e0e0"></div>
<div class="ab" style="left:1039px;top:106px;width:129px;height:2px;background:#217346"></div>
<div class="ab" style="left:1168px;top:89px;width:1px;height:19px;background:#c6c6c6"></div>
<div class="t" style="left:804.0px;width:600px;text-align:center;top:93.00px;font-size:12.5px;color:#222;">E</div>
<div class="ab" style="left:1782px;top:89px;width:1px;height:19px;background:#c6c6c6"></div>
<div class="t" style="left:1175.5px;width:600px;text-align:center;top:93.00px;font-size:12.5px;color:#222;">F</div>
<div class="ab" style="left:1878px;top:89px;width:1px;height:19px;background:#c6c6c6"></div>
<div class="t" style="left:1530.5px;width:600px;text-align:center;top:93.00px;font-size:12.5px;color:#222;">G</div>
<div class="ab" style="left:1899px;top:89px;width:1px;height:19px;background:#c6c6c6"></div>
<div class="ab" style="left:901px;top:110px;width:998px;height:879px;overflow:hidden">
<div class="ab" style="left:0px;top:0px;width:25px;height:879px;background:#e6e6e6"></div>
<div class="ab" style="left:0px;top:0px;width:25px;height:23px;overflow:hidden"><div class="t" style="left:0;width:25px;text-align:center;top:9.20px;font-size:12.5px;color:#222;transform:scaleY(1.08);transform-origin:0 10.6px">2</div></div>
<div class="ab" style="left:0px;top:23px;width:25px;height:1px;background:#c9c9c9"></div>
<div class="ab" style="left:0px;top:23px;width:25px;height:21px;overflow:hidden"><div class="t" style="left:0;width:25px;text-align:center;top:7.20px;font-size:12.5px;color:#222;transform:scaleY(1.08);transform-origin:0 10.6px">3</div></div>
<div class="ab" style="left:0px;top:44px;width:25px;height:1px;background:#c9c9c9"></div>
<div class="ab" style="left:0px;top:44px;width:25px;height:17px;overflow:hidden"><div class="t" style="left:0;width:25px;text-align:center;top:3.20px;font-size:12.5px;color:#222;transform:scaleY(1.08);transform-origin:0 10.6px">4</div></div>
<div class="ab" style="left:0px;top:61px;width:25px;height:1px;background:#c9c9c9"></div>
<div class="ab" style="left:0px;top:61px;width:25px;height:26px;overflow:hidden"><div class="t" style="left:0;width:25px;text-align:center;top:12.20px;font-size:12.5px;color:#222;transform:scaleY(1.08);transform-origin:0 10.6px">5</div></div>
<div class="ab" style="left:0px;top:87px;width:25px;height:1px;background:#c9c9c9"></div>
<div class="ab" style="left:0px;top:87px;width:25px;height:26px;overflow:hidden"><div class="t" style="left:0;width:25px;text-align:center;top:12.20px;font-size:12.5px;color:#222;transform:scaleY(1.08);transform-origin:0 10.6px">6</div></div>
<div class="ab" style="left:0px;top:113px;width:25px;height:1px;background:#c9c9c9"></div>
<div class="ab" style="left:0px;top:113px;width:25px;height:18px;overflow:hidden"><div class="t" style="left:0;width:25px;text-align:center;top:4.20px;font-size:12.5px;color:#222;transform:scaleY(1.08);transform-origin:0 10.6px">7</div></div>
<div class="ab" style="left:0px;top:131px;width:25px;height:1px;background:#c9c9c9"></div>
<div class="ab" style="left:0px;top:131px;width:25px;height:71px;overflow:hidden"><div class="t" style="left:0;width:25px;text-align:center;top:57.20px;font-size:12.5px;color:#222;transform:scaleY(1.08);transform-origin:0 10.6px">8</div></div>
<div class="ab" style="left:0px;top:202px;width:25px;height:1px;background:#c9c9c9"></div>
<div class="ab" style="left:0px;top:202px;width:25px;height:8px;overflow:hidden"><div class="t" style="left:0;width:25px;text-align:center;top:-5.80px;font-size:12.5px;color:#222;transform:scaleY(1.08);transform-origin:0 10.6px">9</div></div>
<div class="ab" style="left:0px;top:210px;width:25px;height:1px;background:#c9c9c9"></div>
<div class="ab" style="left:0px;top:210px;width:25px;height:36px;overflow:hidden"><div class="t" style="left:0;width:25px;text-align:center;top:22.20px;font-size:12.5px;color:#222;transform:scaleY(1.08);transform-origin:0 10.6px">10</div></div>
<div class="ab" style="left:0px;top:246px;width:25px;height:1px;background:#c9c9c9"></div>
<div class="ab" style="left:0px;top:246px;width:25px;height:17px;overflow:hidden"><div class="t" style="left:0;width:25px;text-align:center;top:3.20px;font-size:12.5px;color:#222;transform:scaleY(1.08);transform-origin:0 10.6px">11</div></div>
<div class="ab" style="left:0px;top:263px;width:25px;height:1px;background:#c9c9c9"></div>
<div class="ab" style="left:0px;top:263px;width:25px;height:36px;overflow:hidden"><div class="t" style="left:0;width:25px;text-align:center;top:22.20px;font-size:12.5px;color:#222;transform:scaleY(1.08);transform-origin:0 10.6px">12</div></div>
<div class="ab" style="left:0px;top:299px;width:25px;height:1px;background:#c9c9c9"></div>
<div class="ab" style="left:0px;top:299px;width:25px;height:8px;overflow:hidden"><div class="t" style="left:0;width:25px;text-align:center;top:-5.80px;font-size:12.5px;color:#222;transform:scaleY(1.08);transform-origin:0 10.6px">13</div></div>
<div class="ab" style="left:0px;top:307px;width:25px;height:1px;background:#c9c9c9"></div>
<div class="ab" style="left:0px;top:307px;width:25px;height:19px;overflow:hidden"><div class="t" style="left:0;width:25px;text-align:center;top:5.20px;font-size:12.5px;color:#222;transform:scaleY(1.08);transform-origin:0 10.6px">14</div></div>
<div class="ab" style="left:0px;top:326px;width:25px;height:1px;background:#c9c9c9"></div>
<div class="ab" style="left:0px;top:326px;width:25px;height:9px;overflow:hidden"><div class="t" style="left:0;width:25px;text-align:center;top:-4.80px;font-size:12.5px;color:#222;transform:scaleY(1.08);transform-origin:0 10.6px">15</div></div>
<div class="ab" style="left:0px;top:335px;width:25px;height:1px;background:#c9c9c9"></div>
<div class="ab" style="left:0px;top:335px;width:25px;height:33px;overflow:hidden"><div class="t" style="left:0;width:25px;text-align:center;top:19.20px;font-size:12.5px;color:#222;transform:scaleY(1.08);transform-origin:0 10.6px">16</div></div>
<div class="ab" style="left:0px;top:368px;width:25px;height:1px;background:#c9c9c9"></div>
<div class="ab" style="left:0px;top:368px;width:25px;height:8px;overflow:hidden"><div class="t" style="left:0;width:25px;text-align:center;top:-5.80px;font-size:12.5px;color:#222;transform:scaleY(1.08);transform-origin:0 10.6px">17</div></div>
<div class="ab" style="left:0px;top:376px;width:25px;height:1px;background:#c9c9c9"></div>
<div class="ab" style="left:0px;top:376px;width:25px;height:33px;overflow:hidden"><div class="t" style="left:0;width:25px;text-align:center;top:19.20px;font-size:12.5px;color:#222;transform:scaleY(1.08);transform-origin:0 10.6px">18</div></div>
<div class="ab" style="left:0px;top:409px;width:25px;height:1px;background:#c9c9c9"></div>
<div class="ab" style="left:0px;top:409px;width:25px;height:8px;overflow:hidden"><div class="t" style="left:0;width:25px;text-align:center;top:-5.80px;font-size:12.5px;color:#222;transform:scaleY(1.08);transform-origin:0 10.6px">19</div></div>
<div class="ab" style="left:0px;top:417px;width:25px;height:1px;background:#c9c9c9"></div>
<div class="ab" style="left:0px;top:417px;width:25px;height:19px;overflow:hidden"><div class="t" style="left:0;width:25px;text-align:center;top:5.20px;font-size:12.5px;color:#222;transform:scaleY(1.08);transform-origin:0 10.6px">20</div></div>
<div class="ab" style="left:0px;top:436px;width:25px;height:1px;background:#c9c9c9"></div>
<div class="ab" style="left:0px;top:436px;width:25px;height:9px;overflow:hidden"><div class="t" style="left:0;width:25px;text-align:center;top:-4.80px;font-size:12.5px;color:#222;transform:scaleY(1.08);transform-origin:0 10.6px">21</div></div>
<div class="ab" style="left:0px;top:445px;width:25px;height:1px;background:#c9c9c9"></div>
<div class="ab" style="left:0px;top:445px;width:25px;height:33px;overflow:hidden"><div class="t" style="left:0;width:25px;text-align:center;top:19.20px;font-size:12.5px;color:#222;transform:scaleY(1.08);transform-origin:0 10.6px">22</div></div>
<div class="ab" style="left:0px;top:478px;width:25px;height:1px;background:#c9c9c9"></div>
<div class="ab" style="left:0px;top:478px;width:25px;height:8px;overflow:hidden"><div class="t" style="left:0;width:25px;text-align:center;top:-5.80px;font-size:12.5px;color:#222;transform:scaleY(1.08);transform-origin:0 10.6px">23</div></div>
<div class="ab" style="left:0px;top:486px;width:25px;height:1px;background:#c9c9c9"></div>
<div class="ab" style="left:0px;top:486px;width:25px;height:33px;overflow:hidden"><div class="t" style="left:0;width:25px;text-align:center;top:19.20px;font-size:12.5px;color:#222;transform:scaleY(1.08);transform-origin:0 10.6px">24</div></div>
<div class="ab" style="left:0px;top:519px;width:25px;height:1px;background:#c9c9c9"></div>
<div class="ab" style="left:0px;top:519px;width:25px;height:8px;overflow:hidden"><div class="t" style="left:0;width:25px;text-align:center;top:-5.80px;font-size:12.5px;color:#222;transform:scaleY(1.08);transform-origin:0 10.6px">25</div></div>
<div class="ab" style="left:0px;top:527px;width:25px;height:1px;background:#c9c9c9"></div>
<div class="ab" style="left:0px;top:527px;width:25px;height:19px;overflow:hidden"><div class="t" style="left:0;width:25px;text-align:center;top:5.20px;font-size:12.5px;color:#222;transform:scaleY(1.08);transform-origin:0 10.6px">26</div></div>
<div class="ab" style="left:0px;top:546px;width:25px;height:1px;background:#c9c9c9"></div>
<div class="ab" style="left:0px;top:546px;width:25px;height:9px;overflow:hidden"><div class="t" style="left:0;width:25px;text-align:center;top:-4.80px;font-size:12.5px;color:#222;transform:scaleY(1.08);transform-origin:0 10.6px">27</div></div>
<div class="ab" style="left:0px;top:555px;width:25px;height:1px;background:#c9c9c9"></div>
<div class="ab" style="left:0px;top:555px;width:25px;height:33px;overflow:hidden"><div class="t" style="left:0;width:25px;text-align:center;top:19.20px;font-size:12.5px;color:#222;transform:scaleY(1.08);transform-origin:0 10.6px">28</div></div>
<div class="ab" style="left:0px;top:588px;width:25px;height:1px;background:#c9c9c9"></div>
<div class="ab" style="left:0px;top:588px;width:25px;height:8px;overflow:hidden"><div class="t" style="left:0;width:25px;text-align:center;top:-5.80px;font-size:12.5px;color:#222;transform:scaleY(1.08);transform-origin:0 10.6px">29</div></div>
<div class="ab" style="left:0px;top:596px;width:25px;height:1px;background:#c9c9c9"></div>
<div class="ab" style="left:0px;top:596px;width:25px;height:33px;overflow:hidden"><div class="t" style="left:0;width:25px;text-align:center;top:19.20px;font-size:12.5px;color:#222;transform:scaleY(1.08);transform-origin:0 10.6px">30</div></div>
<div class="ab" style="left:0px;top:629px;width:25px;height:1px;background:#c9c9c9"></div>
<div class="ab" style="left:0px;top:629px;width:25px;height:8px;overflow:hidden"><div class="t" style="left:0;width:25px;text-align:center;top:-5.80px;font-size:12.5px;color:#222;transform:scaleY(1.08);transform-origin:0 10.6px">31</div></div>
<div class="ab" style="left:0px;top:637px;width:25px;height:1px;background:#c9c9c9"></div>
<div class="ab" style="left:0px;top:637px;width:25px;height:33px;overflow:hidden"><div class="t" style="left:0;width:25px;text-align:center;top:19.20px;font-size:12.5px;color:#222;transform:scaleY(1.08);transform-origin:0 10.6px">32</div></div>
<div class="ab" style="left:0px;top:670px;width:25px;height:1px;background:#c9c9c9"></div>
<div class="ab" style="left:0px;top:670px;width:25px;height:8px;overflow:hidden"><div class="t" style="left:0;width:25px;text-align:center;top:-5.80px;font-size:12.5px;color:#222;transform:scaleY(1.08);transform-origin:0 10.6px">33</div></div>
<div class="ab" style="left:0px;top:678px;width:25px;height:1px;background:#c9c9c9"></div>
<div class="ab" style="left:0px;top:678px;width:25px;height:33px;overflow:hidden"><div class="t" style="left:0;width:25px;text-align:center;top:19.20px;font-size:12.5px;color:#222;transform:scaleY(1.08);transform-origin:0 10.6px">34</div></div>
<div class="ab" style="left:0px;top:711px;width:25px;height:1px;background:#c9c9c9"></div>
<div class="ab" style="left:0px;top:711px;width:25px;height:9px;overflow:hidden"><div class="t" style="left:0;width:25px;text-align:center;top:-4.80px;font-size:12.5px;color:#222;transform:scaleY(1.08);transform-origin:0 10.6px">35</div></div>
<div class="ab" style="left:0px;top:720px;width:25px;height:1px;background:#c9c9c9"></div>
<div class="ab" style="left:0px;top:720px;width:25px;height:18px;overflow:hidden"><div class="t" style="left:0;width:25px;text-align:center;top:4.20px;font-size:12.5px;color:#222;transform:scaleY(1.08);transform-origin:0 10.6px">36</div></div>
<div class="ab" style="left:0px;top:738px;width:25px;height:1px;background:#c9c9c9"></div>
<div class="ab" style="left:0px;top:738px;width:25px;height:9px;overflow:hidden"><div class="t" style="left:0;width:25px;text-align:center;top:-4.80px;font-size:12.5px;color:#222;transform:scaleY(1.08);transform-origin:0 10.6px">37</div></div>
<div class="ab" style="left:0px;top:747px;width:25px;height:1px;background:#c9c9c9"></div>
<div class="ab" style="left:0px;top:747px;width:25px;height:33px;overflow:hidden"><div class="t" style="left:0;width:25px;text-align:center;top:19.20px;font-size:12.5px;color:#222;transform:scaleY(1.08);transform-origin:0 10.6px">38</div></div>
<div class="ab" style="left:0px;top:780px;width:25px;height:1px;background:#c9c9c9"></div>
<div class="ab" style="left:0px;top:780px;width:25px;height:8px;overflow:hidden"><div class="t" style="left:0;width:25px;text-align:center;top:-5.80px;font-size:12.5px;color:#222;transform:scaleY(1.08);transform-origin:0 10.6px">39</div></div>
<div class="ab" style="left:0px;top:788px;width:25px;height:1px;background:#c9c9c9"></div>
<div class="ab" style="left:0px;top:788px;width:25px;height:33px;overflow:hidden"><div class="t" style="left:0;width:25px;text-align:center;top:19.20px;font-size:12.5px;color:#222;transform:scaleY(1.08);transform-origin:0 10.6px">40</div></div>
<div class="ab" style="left:0px;top:821px;width:25px;height:1px;background:#c9c9c9"></div>
<div class="ab" style="left:0px;top:821px;width:25px;height:9px;overflow:hidden"><div class="t" style="left:0;width:25px;text-align:center;top:-4.80px;font-size:12.5px;color:#222;transform:scaleY(1.08);transform-origin:0 10.6px">41</div></div>
<div class="ab" style="left:0px;top:830px;width:25px;height:1px;background:#c9c9c9"></div>
<div class="ab" style="left:0px;top:830px;width:25px;height:17px;overflow:hidden"><div class="t" style="left:0;width:25px;text-align:center;top:3.20px;font-size:12.5px;color:#222;transform:scaleY(1.08);transform-origin:0 10.6px">42</div></div>
<div class="ab" style="left:0px;top:847px;width:25px;height:1px;background:#c9c9c9"></div>
<div class="ab" style="left:0px;top:847px;width:25px;height:9px;overflow:hidden"><div class="t" style="left:0;width:25px;text-align:center;top:-4.80px;font-size:12.5px;color:#222;transform:scaleY(1.08);transform-origin:0 10.6px">43</div></div>
<div class="ab" style="left:0px;top:856px;width:25px;height:1px;background:#c9c9c9"></div>
<div class="ab" style="left:0px;top:856px;width:25px;height:33px;overflow:hidden"><div class="t" style="left:0;width:25px;text-align:center;top:19.20px;font-size:12.5px;color:#222;transform:scaleY(1.08);transform-origin:0 10.6px">44</div></div>
<div class="ab" style="left:0px;top:889px;width:25px;height:1px;background:#c9c9c9"></div>
<div class="ab" style="left:25px;top:0px;width:1px;height:879px;background:#c6c6c6"></div>
<div class="ab" style="left:26px;top:4px;width:972px;height:109px;background:#c6e0b4"></div>
<div class="ab" style="left:26px;top:131px;width:972px;height:71px;background:#e2efda"></div>
<div class="ab" style="left:26px;top:210px;width:972px;height:36px;background:#d9d9d9"></div>
<div class="ab" style="left:881px;top:4px;width:117px;height:19px;background:#fff"></div>
<div class="ab" style="left:881px;top:4px;width:1px;height:20px;background:#000"></div>
<div class="ab" style="left:881px;top:23px;width:117px;height:1px;background:#000"></div>
<div class="ab" style="left:267px;top:61px;width:614px;height:52px;border:1px dotted #000"></div>
<div class="ab" style="left:267px;top:87px;width:614px;height:0px;border-top:1px dotted #000"></div>
<div class="ab" style="left:26px;top:1px;width:972px;height:3px;background:#0000c0"></div>
<div class="ab" style="left:0px;top:2px;width:25px;height:1px;background:#bdbdbd"></div>
<div class="ab" style="left:25px;top:0px;width:1px;height:879px;background:#b4b4f0"></div>
<div class="ab" style="left:26px;top:0px;width:1px;height:879px;background:#16167e"></div>
<div class="ab" style="left:26px;top:130px;width:972px;height:2px;background:#000"></div>
<div class="ab" style="left:26px;top:201px;width:972px;height:2px;background:#000"></div>
<div class="ab" style="left:881px;top:131px;width:1px;height:748px;background:#000"></div>
<div class="ab" style="left:977px;top:131px;width:1px;height:748px;background:#000"></div>
<div class="t" style="left:29px;top:5.64px;font-size:16px;color:#000;font-weight:bold">KUESIONER PENGENDALIAN INTERNAL</div>
<div class="t" style="left:29px;top:26.64px;font-size:16px;color:#000;font-weight:bold;font-style:italic">INTERNAL CONTROL QUESTIONNAIRE</div>
<div class="t" style="left:896px;top:3.58px;font-size:19.5px;color:#00a04e;font-weight:bold">KAP Anwar</div>
<div class="t" style="left:28px;top:68.12px;font-size:13px;color:#000;font-weight:bold;transform:scaleY(1.07);transform-origin:0 11px">Nama Klien/<i>Client Name</i>&nbsp;&nbsp;:</div>
<div class="t" style="left:28px;top:94.12px;font-size:13px;color:#000;font-weight:bold;transform:scaleY(1.07);transform-origin:0 11px">Periode Audit/<i>Audit Period</i>&nbsp;&nbsp;:</div>
<div class="t" style="left:270px;top:69.29px;font-size:10.67px;color:#111;">PT Digdaya Kencana Pratama</div>
<div class="t" style="left:270px;top:95.09px;font-size:10.67px;color:#111;">31 Desember 2021</div>
<div class="t" style="left:153px;width:600px;text-align:center;top:187.12px;font-size:13px;color:#000;font-weight:bold;transform:scaleY(1.07);transform-origin:0 11px">PERTANYAAN / <i>QUESTIONS</i></div>
<div class="t" style="left:629px;width:600px;text-align:center;top:152.12px;font-size:13px;color:#000;font-weight:bold;transform:scaleY(1.07);transform-origin:0 11px">Ya/Tidak/NA</div>
<div class="t" style="left:629px;width:600px;text-align:center;top:169.12px;font-size:13px;color:#000;font-weight:bold;font-style:italic;transform:scaleY(1.07);transform-origin:0 11px">(Yes/No/NA)</div>
<div class="t" style="left:992px;top:168.12px;font-size:13px;color:#000;font-weight:bold">K</div>
<div class="t" style="left:984px;top:185.12px;font-size:13px;color:#000;font-weight:bold;font-style:italic">(E</div>
<div class="t" style="left:29px;top:213.12px;font-size:13px;color:#000;font-weight:bold;transform:scaleY(1.07);transform-origin:0 11px">SISTEM AKUNTANSI DAN KOMPUTER</div>
<div class="t" style="left:29px;top:230.12px;font-size:13px;color:#000;font-weight:bold;font-style:italic;transform:scaleY(1.07);transform-origin:0 11px">ACCOUNTING AND COMPUTER SYSTEMS</div>
<div class="t" style="left:28px;top:266.12px;font-size:13px;color:#000;font-weight:bold;transform:scaleY(1.07);transform-origin:0 11px">PENILAIAN ATAS VOLUME PENGOLAHAN</div>
<div class="t" style="left:28px;top:283.12px;font-size:13px;color:#000;font-weight:bold;font-style:italic;transform:scaleY(1.07);transform-origin:0 11px">APPRAISAL OF PROCESSING VOLUMES</div>
<div class="t" style="left:28px;top:312.12px;font-size:13px;color:#111;transform:scaleY(1.07);transform-origin:0 11px">Produksi/<i>Production</i></div>
<div class="t" style="left:28px;top:422.12px;font-size:13px;color:#111;transform:scaleY(1.07);transform-origin:0 11px">Persediaan/<i>Inventories</i></div>
<div class="t" style="left:28px;top:532.12px;font-size:13px;color:#111;transform:scaleY(1.07);transform-origin:0 11px">Pembelian dan utang/<i>Purchases and payables</i></div>
<div class="t" style="left:28px;top:724.12px;font-size:13px;color:#111;transform:scaleY(1.07);transform-origin:0 11px">Daftar gaji/<i>Payroll</i></div>
<div class="t" style="left:28px;top:833.12px;font-size:13px;color:#111;transform:scaleY(1.07);transform-origin:0 11px">Penjualan/<i>Sales</i></div>
<div class="t" style="left:76px;top:337.12px;font-size:13px;color:#111;transform:scaleY(1.07);transform-origin:0 11px">Volume produksi (tentukan periode referensi)</div>
<div class="t" style="left:76px;top:354.12px;font-size:13px;color:#111;font-style:italic;transform:scaleY(1.07);transform-origin:0 11px">Production volume (specify the period of reference)</div>
<div class="t" style="left:629px;width:600px;text-align:center;top:345.62px;font-size:13px;color:#111;transform:scaleY(1.07);transform-origin:0 11px">NA</div>
<div class="t" style="left:76px;top:378.12px;font-size:13px;color:#111;transform:scaleY(1.07);transform-origin:0 11px">Kapasitas produksi (tentukan periode referensi)</div>
<div class="t" style="left:76px;top:395.12px;font-size:13px;color:#111;font-style:italic;transform:scaleY(1.07);transform-origin:0 11px">Production capacity (specify the period of reference)</div>
<div class="t" style="left:629px;width:600px;text-align:center;top:386.62px;font-size:13px;color:#111;transform:scaleY(1.07);transform-origin:0 11px">NA</div>
<div class="t" style="left:76px;top:447.12px;font-size:13px;color:#111;transform:scaleY(1.07);transform-origin:0 11px">Nomor referensi (per kategori persediaan jika diberlakukan)</div>
<div class="t" style="left:76px;top:464.12px;font-size:13px;color:#111;font-style:italic;transform:scaleY(1.07);transform-origin:0 11px">Number of references (per inventory category if applicable)</div>
<div class="t" style="left:629px;width:600px;text-align:center;top:455.62px;font-size:13px;color:#111;transform:scaleY(1.07);transform-origin:0 11px">Ya (Yes)</div>
<div class="t" style="left:76px;top:488.12px;font-size:13px;color:#111;transform:scaleY(1.07);transform-origin:0 11px">Kapasitas penyimpanan (per kategori persediaan jika diberlakukan)</div>
<div class="t" style="left:76px;top:505.12px;font-size:13px;color:#111;font-style:italic;transform:scaleY(1.07);transform-origin:0 11px">Storage capacity (per inventory category if applicable)</div>
<div class="t" style="left:629px;width:600px;text-align:center;top:496.62px;font-size:13px;color:#111;transform:scaleY(1.07);transform-origin:0 11px">Ya (Yes)</div>
<div class="t" style="left:76px;top:557.12px;font-size:13px;color:#111;transform:scaleY(1.07);transform-origin:0 11px">Jumlah pesanan pembelian tiap bulan (dan per jenis pembelian jika diberlakukan)</div>
<div class="t" style="left:76px;top:574.12px;font-size:13px;color:#111;font-style:italic;transform:scaleY(1.07);transform-origin:0 11px">Number of purchase orders per month (and per type of purchase if applicable)</div>
<div class="t" style="left:629px;width:600px;text-align:center;top:565.62px;font-size:13px;color:#111;transform:scaleY(1.07);transform-origin:0 11px">Ya (Yes)</div>
<div class="t" style="left:76px;top:598.12px;font-size:13px;color:#111;transform:scaleY(1.07);transform-origin:0 11px">Jumlah akun buku besar pembelian&nbsp; (dan per jenis pembelian jika diberlakukan)</div>
<div class="t" style="left:76px;top:615.12px;font-size:13px;color:#111;font-style:italic;transform:scaleY(1.07);transform-origin:0 11px">Number of purchase ledger accounts (and per type of purchase if applicable)</div>
<div class="t" style="left:629px;width:600px;text-align:center;top:606.62px;font-size:13px;color:#111;transform:scaleY(1.07);transform-origin:0 11px">Ya (Yes)</div>
<div class="t" style="left:76px;top:639.12px;font-size:13px;color:#111;transform:scaleY(1.07);transform-origin:0 11px">Jumlah faktur pembelian tiap bulan (dan per jenis pembelian jika diberlakukan)</div>
<div class="t" style="left:76px;top:656.12px;font-size:13px;color:#111;font-style:italic;transform:scaleY(1.07);transform-origin:0 11px">Number of purchase invoices per month (and per type of purchase if applicable)</div>
<div class="t" style="left:629px;width:600px;text-align:center;top:647.62px;font-size:13px;color:#111;transform:scaleY(1.07);transform-origin:0 11px">Ya (Yes)</div>
<div class="t" style="left:76px;top:680.12px;font-size:13px;color:#111;transform:scaleY(1.07);transform-origin:0 11px">Jumlah pembelian tiap bulan (dan per jenis pembelian jika diberlakukan)</div>
<div class="t" style="left:76px;top:697.12px;font-size:13px;color:#111;font-style:italic;transform:scaleY(1.07);transform-origin:0 11px">Amount of purchases per month (and per type of purchase if applicable)</div>
<div class="t" style="left:629px;width:600px;text-align:center;top:688.62px;font-size:13px;color:#111;transform:scaleY(1.07);transform-origin:0 11px">Ya (Yes)</div>
<div class="t" style="left:76px;top:749.12px;font-size:13px;color:#111;transform:scaleY(1.07);transform-origin:0 11px">Jumlah lembar slip pembayaran gaji tiap bulan</div>
<div class="t" style="left:76px;top:766.12px;font-size:13px;color:#111;font-style:italic;transform:scaleY(1.07);transform-origin:0 11px">Number of payslips per month</div>
<div class="t" style="left:629px;width:600px;text-align:center;top:757.62px;font-size:13px;color:#111;transform:scaleY(1.07);transform-origin:0 11px">Ya (Yes)</div>
<div class="t" style="left:76px;top:790.12px;font-size:13px;color:#111;transform:scaleY(1.07);transform-origin:0 11px">Jumlah gaji bulanan</div>
<div class="t" style="left:76px;top:807.12px;font-size:13px;color:#111;font-style:italic;transform:scaleY(1.07);transform-origin:0 11px">Amount of monthly payroll</div>
<div class="t" style="left:629px;width:600px;text-align:center;top:798.62px;font-size:13px;color:#111;transform:scaleY(1.07);transform-origin:0 11px">Ya (Yes)</div>
<div class="t" style="left:76px;top:858.12px;font-size:13px;color:#111;transform:scaleY(1.07);transform-origin:0 11px">Jumlah pesanan penjualan tiap bulan (a)</div>
<div class="t" style="left:76px;top:875.12px;font-size:13px;color:#111;font-style:italic;transform:scaleY(1.07);transform-origin:0 11px">Number of sales orders per month (a)</div>
<div class="t" style="left:629px;width:600px;text-align:center;top:866.62px;font-size:13px;color:#111;transform:scaleY(1.07);transform-origin:0 11px">Ya (Yes)</div>
</div>
<div class="ab" style="left:1899px;top:89px;width:20px;height:900px;background:#dedede"></div>
<div class="ab" style="left:1898px;top:89px;width:1px;height:900px;background:#a8a8a8"></div>
<div class="ab" style="left:1902px;top:91px;width:15px;height:16px;background:#fff;border:1px solid #c8c8c8"></div>
<svg style="left:1905px;top:96px" width="9" height="5" viewBox="0 0 9 5"><path d="M0.5 4.5L4.5 0.5l4 4z" fill="#6a6a6a"/></svg>
<div class="ab" style="left:1902px;top:108px;width:15px;height:87px;background:#fff;border:1px solid #d0d0d0"></div>
<div class="ab" style="left:1902px;top:975px;width:15px;height:14px;background:#fff;border:1px solid #c8c8c8"></div>
<svg style="left:1905px;top:980px" width="9" height="5" viewBox="0 0 9 5"><path d="M0.5 0.5h8l-4 4z" fill="#6a6a6a"/></svg>
<div class="ab" style="left:900px;top:989px;width:1020px;height:27px;background:#e6e6e6"></div>
<div class="ab" style="left:900px;top:989px;width:1000px;height:1px;background:#bdbdbd"></div>
<svg style="left:927px;top:998px" width="6" height="9" viewBox="0 0 6 9"><path d="M5 0.5L1 4.5 5 8.5" fill="none" stroke="#bbb" stroke-width="1.2"/></svg>
<svg style="left:955px;top:998px" width="6" height="9" viewBox="0 0 6 9"><path d="M1 0.5L5 4.5 1 8.5" fill="none" stroke="#bbb" stroke-width="1.2"/></svg>
<div class="ab" style="left:1001px;top:989px;width:65px;height:24px;background:#fff;border-left:1px solid #bdbdbd;border-right:1px solid #bdbdbd"></div>
<div class="ab" style="left:1001px;top:1011px;width:65px;height:2px;background:#217346"></div>
<div class="t" style="left:733px;width:600px;text-align:center;top:996.22px;font-size:13px;color:#217346;font-weight:bold">Sheet1</div>
<svg style="left:1098px;top:994px" width="17" height="17" viewBox="0 0 17 17"><circle cx="8.5" cy="8.5" r="7.5" fill="none" stroke="#c4c4c4" stroke-width="1.2"/><path d="M8.5 4.5v8M4.5 8.5h8" stroke="#c4c4c4" stroke-width="1.4"/></svg>
<div class="ab" style="left:1512px;top:998px;width:2px;height:2px;background:#9a9a9a"></div>
<div class="ab" style="left:1512px;top:1002px;width:2px;height:2px;background:#9a9a9a"></div>
<div class="ab" style="left:1512px;top:1006px;width:2px;height:2px;background:#9a9a9a"></div>
<div class="ab" style="left:1529px;top:996px;width:369px;height:15px;background:#dadada"></div>
<div class="ab" style="left:1529px;top:996px;width:15px;height:15px;background:#fff;border:1px solid #c8c8c8"></div>
<svg style="left:1534px;top:1000px" width="5" height="8" viewBox="0 0 5 8"><path d="M4.5 0.5v7L0.5 4z" fill="#555"/></svg>
<div class="ab" style="left:1544px;top:996px;width:19px;height:15px;background:#fff;border:1px solid #c8c8c8"></div>
<div class="ab" style="left:1884px;top:996px;width:14px;height:15px;background:#fff;border:1px solid #c8c8c8"></div>
<svg style="left:1889px;top:1000px" width="5" height="8" viewBox="0 0 5 8"><path d="M0.5 0.5v7L4.5 4z" fill="#555"/></svg></body></html>
